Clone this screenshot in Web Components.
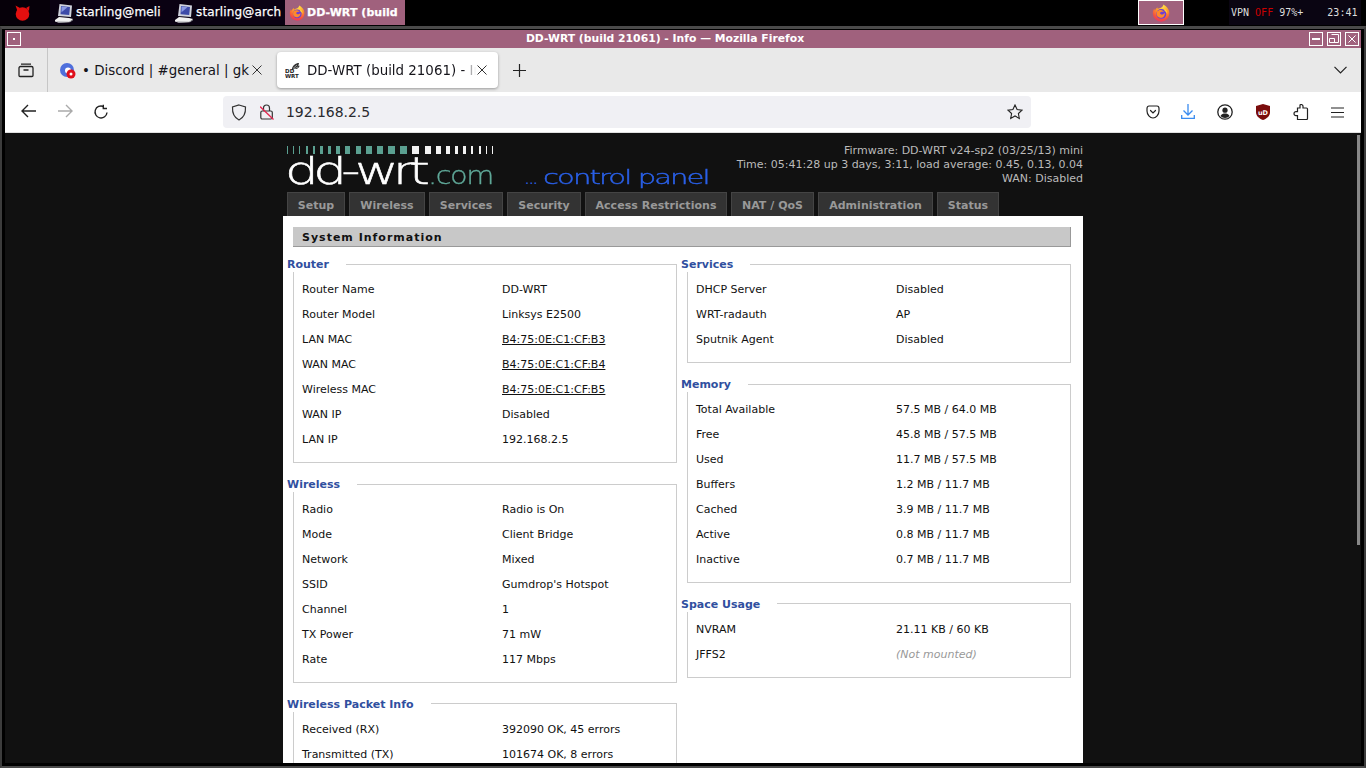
<!DOCTYPE html>
<html><head><meta charset="utf-8"><title>DD-WRT</title>
<style>
html,body{margin:0;padding:0;background:#000;height:768px;overflow:hidden;font-family:"DejaVu Sans",sans-serif}
a{color:inherit}
</style></head><body>
<wm-bar></wm-bar>
<wm-window>
  <ff-tabs></ff-tabs>
  <ff-toolbar></ff-toolbar>
  <dd-viewport>
    <dd-page>
      <dd-section slot="left" heading="Router">
        <dd-row label="Router Name">DD-WRT</dd-row>
        <dd-row label="Router Model">Linksys E2500</dd-row>
        <dd-row label="LAN MAC"><a href="#">B4:75:0E:C1:CF:B3</a></dd-row>
        <dd-row label="WAN MAC"><a href="#">B4:75:0E:C1:CF:B4</a></dd-row>
        <dd-row label="Wireless MAC"><a href="#">B4:75:0E:C1:CF:B5</a></dd-row>
        <dd-row label="WAN IP">Disabled</dd-row>
        <dd-row label="LAN IP">192.168.2.5</dd-row>
      </dd-section>
      <dd-section slot="left" heading="Wireless">
        <dd-row label="Radio">Radio is On</dd-row>
        <dd-row label="Mode">Client Bridge</dd-row>
        <dd-row label="Network">Mixed</dd-row>
        <dd-row label="SSID">Gumdrop's Hotspot</dd-row>
        <dd-row label="Channel">1</dd-row>
        <dd-row label="TX Power">71 mW</dd-row>
        <dd-row label="Rate">117 Mbps</dd-row>
      </dd-section>
      <dd-section slot="left" heading="Wireless Packet Info" tight>
        <dd-row label="Received (RX)">392090 OK, 45 errors</dd-row>
        <dd-row label="Transmitted (TX)">101674 OK, 8 errors</dd-row>
      </dd-section>
      <dd-section slot="right" heading="Services">
        <dd-row label="DHCP Server">Disabled</dd-row>
        <dd-row label="WRT-radauth">AP</dd-row>
        <dd-row label="Sputnik Agent">Disabled</dd-row>
      </dd-section>
      <dd-section slot="right" heading="Memory">
        <dd-row label="Total Available">57.5 MB / 64.0 MB</dd-row>
        <dd-row label="Free">45.8 MB / 57.5 MB</dd-row>
        <dd-row label="Used">11.7 MB / 57.5 MB</dd-row>
        <dd-row label="Buffers">1.2 MB / 11.7 MB</dd-row>
        <dd-row label="Cached">3.9 MB / 11.7 MB</dd-row>
        <dd-row label="Active">0.8 MB / 11.7 MB</dd-row>
        <dd-row label="Inactive">0.7 MB / 11.7 MB</dd-row>
      </dd-section>
      <dd-section slot="right" heading="Space Usage" tight>
        <dd-row label="NVRAM">21.11 KB / 60 KB</dd-row>
        <dd-row label="JFFS2"><i style="color:#999">(Not mounted)</i></dd-row>
      </dd-section>
    </dd-page>
  </dd-viewport>
</wm-window>
<script>
const FX=(s)=>`<svg width="${s}" height="${s}" viewBox="0 0 20 20"><defs><radialGradient id="fx" cx=".6" cy=".1" r="1"><stop offset="0" stop-color="#ffe14a"/><stop offset=".4" stop-color="#ff9a2a"/><stop offset=".75" stop-color="#f5503f"/><stop offset="1" stop-color="#e02a7a"/></radialGradient></defs><path d="M12.500.6c3.800 1.700 6.800 5.300 6.800 9.700a9.200 9.200 0 0 1-18.400.2c0-2 .5-3.800 1.500-5.300.2.900.6 1.600 1 2 .5-1.500 1.500-2.900 3-3.300-.2.600-.2 1.100 0 1.600C8.800 4.500 12.600 4 12.500.6z" fill="url(#fx)"/><circle cx="10.300" cy="11" r="5.500" fill="#6c3fd6"/><path d="M5.500 8.300c1-1.200 2.800-1.900 4.500-1.700 1.500.2 2.700 1 3.300 2.200-.8-.3-1.800-.4-2.800-.2-.5.600-1 .9-1.700 1 .1 1 1 2 2.300 2 1.400 0 2.400-.8 3-2 .7 3-1.500 6-5 5.600-2.600-.3-4.300-2.600-4-5 .1-.7.200-1.300.4-1.900z" fill="#ff8a2a"/><path d="M14 5.500c2 1.200 3.300 3.500 3 6-.3-1.500-1.200-3-3-3.700z" fill="#ffd23a"/></svg>`;
const PC=`<svg width="20" height="20" viewBox="0 0 20 20"><path d="M5.500 1L18 2.500 17 14 4 13z" fill="#cfd2dd"/><path d="M7 3l9 1-.8 8-8.700-.8z" fill="#3d4aa8"/><path d="M7.500 3.500l6 .7-6 5z" fill="#8c9be6"/><path d="M1 17l4-3 10 1 4 1-3 3-11 .8L1 18.500z" fill="#f2f2f2"/><path d="M2 18.500l13 .3 4-2.500v1l-3 2-11 .5z" fill="#8f8f95"/></svg>`;
function def(name,html){customElements.define(name,class extends HTMLElement{constructor(){super();this.attachShadow({mode:'open'}).innerHTML=typeof html==='function'?html(this):html;}});}

def('wm-task',`<style>:host{display:flex;align-items:center;height:25px;background:var(--bg,#0a0112);color:#fff;font:12px/25px "DejaVu Sans",sans-serif;box-sizing:border-box;overflow:hidden;white-space:nowrap;letter-spacing:.15px;-webkit-text-stroke:.25px #fff}</style><slot name="icon"></slot><slot></slot>`);

def('wm-bar',`<style>
:host{display:flex;height:25px;background:#000;align-items:flex-start}
.apple{width:50px;display:flex;height:25px;align-items:center;box-sizing:border-box;padding-left:14px;background:#060009}
.sp{flex:1}
.act{width:46px;height:25px;box-sizing:border-box;border:1px solid #fff;background:#a0617d;display:flex;align-items:center;justify-content:center;margin-right:45px}
.st{width:132px;height:25px;background:#0a0512;color:#ddd;font:10px/26px "DejaVu Sans Mono",monospace;white-space:pre;padding-left:2px;margin-right:5px;box-sizing:border-box;display:block}
.st b{color:#c00;font-weight:400}
svg{flex:none}
</style>
<div class="apple"><svg width="18" height="18" viewBox="0 0 18 18"><circle cx="8.500" cy="10" r="6.800" fill="#e30f0f"/><path d="M1.500 1.500L6 4 3.500 7zM15.500 2l-.5 5-3-3z" fill="#e30f0f"/></svg></div>
<wm-task style="width:116px;padding-left:4px"><span slot="icon" style="width:22px;display:flex">${PC}</span>starling@meli</wm-task>
<wm-task style="width:119px;padding-left:8px"><span slot="icon" style="width:22px;display:flex">${PC}</span>starling@arch</wm-task>
<wm-task style="width:120px;--bg:#a0617d;padding-left:4px;font-weight:700;font-size:11px;letter-spacing:.05px"><span slot="icon" style="width:18px;display:flex">${FX(16)}</span>DD-WRT (build</wm-task>
<div class="sp"></div>
<div class="act">${FX(18)}</div>
<div class="st">VPN <b>OFF</b> 97%+    23:41</div>`);

def('wm-window',`<style>
:host{display:block;height:743px;box-sizing:border-box;border-top:1px solid #000}
.outer{height:742px;box-sizing:border-box;border-top:3px solid #4a4a4a;border-left:2px solid #3c3c3c;border-right:2px solid #3c3c3c;border-bottom:2px solid #4a4a4a;background:#000;padding:1px 3px 3px 3px}
.win{height:100%;display:flex;flex-direction:column}
.title{height:18px;background:#a0617d;color:#fff;font:700 10.8px/18px "DejaVu Sans",sans-serif;text-align:center;position:relative;flex:none;padding-right:36px}
.b{position:absolute;top:2px;width:14px;height:14px;box-sizing:border-box;border:1px solid #fff;display:flex;align-items:center;justify-content:center}
</style>
<div class="outer"><div class="win"><div class="title">DD-WRT (build 21061) - Info — Mozilla Firefox
<span class="b" style="left:2px"><svg width="4" height="4"><rect x="1" y="1" width="2" height="2" fill="#fff"/></svg></span>
<span class="b" style="right:38px"><svg width="8" height="8"><rect x="0" y="3" width="8" height="2" fill="#fff"/></svg></span>
<span class="b" style="right:20px"><svg width="10" height="10" fill="none" stroke="#fff"><path d="M2.500.5h7v8h-9v-4h5v4"/></svg></span>
<span class="b" style="right:2px"><svg width="8" height="8" stroke="#fff"><path d="M.5.5l7 7M7.500.5l-7 7"/></svg></span>
</div><slot></slot></div></div>`);

def('ff-tab',`<style>
:host{display:flex;align-items:center;height:36px;box-sizing:border-box;font:13.4px "DejaVu Sans",sans-serif;color:#15141a;white-space:nowrap;flex:none}
.i{flex:none;display:flex}
.t{overflow:hidden;flex:1;margin-left:var(--gap,6px);-webkit-mask-image:var(--fade,none)}
.x{flex:none;display:flex}
</style><span class="i"><slot name="icon"></slot></span><span class="t"><slot></slot></span><span class="x"><svg width="10" height="10" stroke="#333" stroke-width="1"><path d="M.5.500l9 9M9.500.500l-9 9"/></svg></span>`);

def('ff-tabs',`<style>
:host{display:flex;height:44px;background:#e9e9e9;align-items:center;flex:none;color:#222}
.view{width:42px;height:44px;display:flex;align-items:center;justify-content:center;border-right:1px solid #c6c6c6;box-sizing:content-box;flex:none}
.spacer{flex:1}
#t1{width:202px;margin-left:12px}
#t2{width:221px;margin-left:15px;background:#fff;border-radius:4px;box-shadow:0 1px 3px rgba(0,0,0,.35);padding:0 11px 0 8px;box-sizing:border-box;--gap:7px;--fade:linear-gradient(90deg,#000 calc(100% - 14px),transparent calc(100% - 1px))}
.plus{margin-left:15px;display:flex}
.chev{margin-right:14px;display:flex}
</style>
<div class="view"><svg width="16" height="16" viewBox="0 0 16 16" fill="none" stroke="#222" stroke-width="1.300"><path d="M3 2.200h10M1 6a1.500 1.500 0 0 1 1.500-1.500h11A1.500 1.500 0 0 1 15 6v7.500a1 1 0 0 1-1 1H2a1 1 0 0 1-1-1zM5.500 8h5"/></svg></div>
<ff-tab id="t1"><svg slot="icon" width="16" height="17" viewBox="0 0 16 17"><circle cx="7" cy="8" r="7" fill="#4f6fdc"/><circle cx="8" cy="8.500" r="3" fill="#fff"/><circle cx="11" cy="12" r="4.500" fill="#e0101c"/><circle cx="11" cy="12" r="1.500" fill="#fff"/></svg>• Discord | #general | gk</ff-tab>
<ff-tab id="t2"><svg slot="icon" width="15" height="16" viewBox="0 0 15 16"><path d="M7 6.500c.6-3 3.500-5.500 7-5.500-.2 1.300-.4 2-.8 2.800.6 0 1 0 1.500-.1-1 2.500-3 3.800-5.500 3.300-.8.500-1.500 1-2.200 1.500z" fill="#333"/><path d="M8 6.500l4-3.500M9 7l4-2" stroke="#fff" stroke-width=".5"/><text x="0" y="11" font-family="DejaVu Sans" font-weight="700" font-size="5.500" fill="#222" letter-spacing=".2">DD</text><text x="0" y="16" font-family="DejaVu Sans" font-weight="700" font-size="5.500" fill="#222">WRT</text></svg>DD-WRT (build 21061) - Info</ff-tab>
<div class="plus"><svg width="13" height="13" stroke="#222" stroke-width="1.200"><path d="M6.500 0v13M0 6.500h13"/></svg></div>
<div class="spacer"></div>
<div class="chev"><svg width="13" height="8" fill="none" stroke="#222" stroke-width="1.200"><path d="M.5.800L6.500 6.800 12.500.8"/></svg></div>`);

def('ff-toolbar',`<style>
:host{display:flex;height:41px;background:#fff;align-items:center;flex:none;border-bottom:1px solid #e0e0e0;box-sizing:border-box;position:relative;color:#222}
svg{display:block;flex:none}
.nav{display:flex;margin-left:6px}
.nav span{width:36px;display:flex;justify-content:center}
.url{width:808px;height:32px;background:#f0f0f4;border-radius:4px;margin-left:104px;display:flex;align-items:center;box-sizing:border-box;padding-left:8px;font:14px "DejaVu Sans",sans-serif;color:#2a2a2e;letter-spacing:-.05px;flex:none}
.end{margin-left:auto;margin-right:8px}
.ic{width:38px;display:flex;justify-content:center;flex:none}
</style>
<div class="nav">
<span><svg width="16" height="14" viewBox="0 0 16 14" fill="none" stroke="#222" stroke-width="1.400"><path d="M15 7H1.500M7 1L1 7l6 6"/></svg></span>
<span><svg width="16" height="14" viewBox="0 0 16 14" fill="none" stroke="#aaa" stroke-width="1.400"><path d="M1 7h13.500M9 1l6 6-6 6"/></svg></span>
<span><svg width="16" height="16" viewBox="0 0 16 16" fill="none" stroke="#222" stroke-width="1.400"><path d="M14 8.500A6 6 0 1 1 10.500 2.500"/><path d="M10.300 .8v3.700h3.700"/></svg></span>
</div>
<div class="url">
<svg width="16" height="17" viewBox="0 0 16 17" fill="none" stroke="#333" stroke-width="1.200"><path d="M8 1l6.500 2c.3 6-1.500 10.500-6.500 13C3 13.500 1.200 9 1.500 3z"/></svg>
<svg style="margin-left:13px" width="14" height="16" viewBox="0 0 14 16" fill="none" stroke="#333" stroke-width="1.200"><rect x=".8" y="7" width="11.500" height="8" rx="1.500"/><path d="M3.500 7V4a3 3 0 0 1 6 0v3"/><path d="M0 2.500L13.500 15.500" stroke="#e22850" stroke-width="1.300"/></svg>
<span style="margin-left:12px">192.168.2.5</span>
<svg class="end" width="16" height="16" viewBox="0 0 16 16" fill="none" stroke="#222" stroke-width="1.100"><path d="M8 1l2.100 4.500 4.900.6-3.600 3.400.9 4.900L8 12l-4.300 2.400.9-4.900L1 6.100l4.900-.6z"/></svg>
</div>
<div style="margin-left:103px;display:flex;align-items:center">
<span class="ic" style="width:36px;padding-left:2px;box-sizing:border-box"><svg width="14" height="14" viewBox="0 0 14 14" fill="none" stroke="#222" stroke-width="1.200"><path d="M1 3.500C1 2 2 1 3 1h8c1 0 2 1 2 2.500V6c0 3.500-3 7-6 7S1 9.500 1 6z"/><path d="M4.500 5.500L7 8l2.500-2.500" stroke-linecap="round"/></svg></span>
<span class="ic" style="width:36px"><svg width="14" height="16" viewBox="0 0 14 16" fill="none" stroke="#3a8cf0" stroke-width="1.300"><path d="M7 0v11M2.500 6.500L7 11l4.500-4.500M.7 11v3.300h12.600V11"/></svg></span>
<span class="ic"><svg width="16" height="16" viewBox="0 0 16 16"><circle cx="8" cy="8" r="7.200" fill="none" stroke="#222" stroke-width="1.300"/><circle cx="8" cy="6.200" r="2.600" fill="#222"/><path d="M3.500 12c1-2 2.800-2.500 4.500-2.500s3.500.5 4.500 2.500c-1 1-2.800 2-4.500 2s-3.500-1-4.500-2z" fill="#222"/></svg></span>
<span class="ic"><svg width="14" height="16" viewBox="0 0 14 16"><path d="M7 0l7 2v6c0 4-3 6.500-7 8-4-1.500-7-4-7-8V2z" fill="#7a0c0c"/><text x="7" y="10.500" font-size="6.500" font-weight="700" fill="#fff" text-anchor="middle" font-family="DejaVu Sans">uD</text></svg></span>
<span class="ic"><svg width="16" height="16" viewBox="0 0 16 16" fill="none" stroke="#222" stroke-width="1.200"><path d="M7 1a1.800 1.800 0 0 1 3 1.500V4h3.500a1 1 0 0 1 1 1v9.500a1 1 0 0 1-1 1H4.500v-3.800H3a2 2 0 1 1 0-4h1.500V4H7z"/></svg></span>
<span class="ic" style="width:34px"><svg width="13" height="11" stroke="#222" stroke-width="1.200"><path d="M0 1h13M0 5.500h13M0 10h13"/></svg></span>
</div>`);

def('dd-viewport',`<style>:host{display:block;flex:1;min-height:0;background:#111;overflow:hidden;position:relative}
.sb{position:absolute;right:1px;top:2px;width:3px;height:410px;background:#888}</style><slot></slot><div class="sb"></div>`);

def('dd-logo',()=>{let bars='';const tw=[1,1,1,2,2,3,3,4,5,5,6,6,7,7,7,6,5,4,3,3,2,2,1,1];tw.forEach((w,i)=>{bars+=`<i style="width:${w}px;background:${i<14?'#5fa898':'#fff'}"></i>`});
return `<style>
:host{display:block;width:430px;height:59px;margin:13px 0 0 3px;position:relative}
.bars{display:flex;justify-content:space-between;width:206px;height:8px;margin-left:1px;align-items:stretch;opacity:.95}
.bars i{display:block}
.txt{display:flex;align-items:baseline;height:34px;white-space:nowrap;font-family:"DejaVu Sans",sans-serif;font-weight:200;line-height:34px}
.dd{display:inline-block;font-size:38px;color:#fff;transform:scaleX(1.4);transform-origin:0 100%;width:143px;letter-spacing:-4px;-webkit-text-stroke:.5px #fff;margin-left:-1px}
.com{display:inline-block;font-size:24px;color:#5fa898;transform:scaleX(1.2);transform-origin:0 100%;width:97px;letter-spacing:-1.2px;-webkit-text-stroke:.3px #5fa898}
.dots{display:inline-block;width:18px;font-size:13px;font-weight:400;color:#2a60e8}
.cp{display:inline-block;font-size:20px;color:#2a60e8;transform:scaleX(1.45);transform-origin:0 100%;letter-spacing:-1.3px;-webkit-text-stroke:.4px #2a60e8}
</style><div class="bars">${bars}</div><div class="txt"><span class="dd">dd-wrt</span><span class="com">.com</span><span class="dots">...</span><span class="cp">control panel</span></div>`});

def('dd-nav',`<style>
:host{display:flex;gap:4px;height:24px;padding-left:4px}
span{display:block;box-sizing:border-box;height:24px;background:#333;border:1px solid #444;border-bottom:0;color:#999;font:700 11px/25px "DejaVu Sans",sans-serif;letter-spacing:.03px;text-align:center}
</style>
<span style="width:58px">Setup</span><span style="width:76px">Wireless</span><span style="width:74px">Services</span><span style="width:74px">Security</span><span style="width:142px">Access Restrictions</span><span style="width:83px">NAT / QoS</span><span style="width:115px">Administration</span><span style="width:62px">Status</span>`);

def('dd-page',`<style>
:host{display:block;width:800px;margin:0 auto;color:#000;font:11px "DejaVu Sans",sans-serif}
.head{height:83px;background:#111;position:relative;overflow:hidden}
.info{position:absolute;right:0;top:11px;text-align:right;color:#bbb;font:11px/14px "DejaVu Sans",sans-serif}
.body{background:#fff;height:547px;padding:11px 12px 0 10px;box-sizing:border-box;overflow:hidden}
h2{margin:0;height:20px;background:#c8c8c8;border-right:1px solid #999;border-bottom:1px solid #999;box-sizing:border-box;font:700 11px/21px "DejaVu Sans",sans-serif;letter-spacing:1px;color:#111;padding-left:9px}
.cols{display:grid;grid-template-columns:384px 384px;column-gap:10px;margin-top:9px}
</style>
<div class="head"><dd-logo></dd-logo><dd-nav style="position:absolute;left:0;bottom:0"></dd-nav>
<div class="info">Firmware: DD-WRT v24-sp2 (03/25/13) mini<br>Time: 05:41:28 up 3 days, 3:11, load average: 0.45, 0.13, 0.04<br>WAN: Disabled</div></div>
<div class="body"><h2>System Information</h2>
<div class="cols"><div><slot name="left"></slot></div><div><slot name="right"></slot></div></div></div>`);

def('dd-section',h=>`<style>
:host{display:block;margin-bottom:13.5px}
:host([tight]){margin-top:-2px}
fieldset{margin:0;border:1px solid #ccc;padding:4.5px 0 10px 0;min-width:0}
legend{margin-left:-7px;padding:2px 17px 0 0;font:700 11px/14px "DejaVu Sans",sans-serif;color:#304f9f;background:#fff}
:host([tight]) legend{padding-top:4px}
</style><fieldset><legend>${h.getAttribute('heading')}</legend><slot></slot></fieldset>`);

def('dd-row',h=>`<style>
:host{display:flex;height:25px;padding-left:8px;font:11px/25px "DejaVu Sans",sans-serif;color:#111}
.l{width:200px;flex:none}
</style><span class="l">${h.getAttribute('label')}</span><span><slot></slot></span>`);
</script>
</body></html>
